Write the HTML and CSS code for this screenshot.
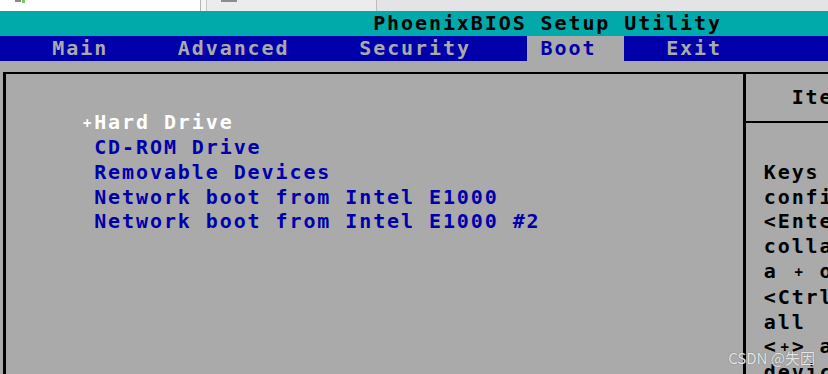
FILE: index.html
```html
<!DOCTYPE html>
<html lang="en">
<head>
    <meta charset="UTF-8">
    <title>PhoenixBIOS Setup Utility</title>
    <link rel="stylesheet" href="styles.css">
</head>
<body>
    <div class="window-tabs">
        <div class="tab tab-first"><span class="tab-icon"></span><span class="tab-dot"></span></div>
        <div class="tab tab-gap"></div>
        <div class="tab tab-second"><span class="tab-bar"></span></div>
        <div class="tab tab-rest"></div>
    </div>

    <div class="screen">
        <div class="title-row">PhoenixBIOS Setup Utility</div>
        <div class="menu-row">    Main     Advanced     Security    <span class="menu-active"> Boot  </span>   Exit</div>

        <div class="setup-area">
            <div class="frame">
                <div class="boot-list">
                    <div class="boot-item selected"><span class="expander">+</span>Hard Drive</div>
                    <div class="boot-item"> CD-ROM Drive</div>
                    <div class="boot-item"> Removable Devices</div>
                    <div class="boot-item"> Network boot from Intel E1000</div>
                    <div class="boot-item"> Network boot from Intel E1000 #2</div>
                </div>
                <div class="help">
                    <div class="help-title">Item Specific Help</div>
                    <div class="help-rule"></div>
                    <div class="help-text">Keys used to view or
configure devices:
&lt;Enter&gt; expands or
collapses devices with
a <span class="small-plus">+</span> or -
&lt;Ctrl+Enter&gt; expands
all
&lt;<span class="small-plus">+</span>&gt; and &lt;-&gt; moves the
device up or down.</div>
                </div>
            </div>
        </div>
    </div>

    <div class="watermark">CSDN @失因</div>
</body>
</html>
```

FILE: styles.css
```css
:root {
    --cw: 13.95px;
    --rh: 24.8px;
    --bios-blue: #0000aa;
    --bios-gray: #aaaaaa;
    --bios-teal: #00aaaa;
}

html, body {
    margin: 0;
    height: 374px;
    overflow: hidden;
    background: var(--bios-gray);
}

/* host window strip at the very top */
.window-tabs {
    display: flex;
    height: 11px;
}

.tab {
    height: 11px;
    box-sizing: border-box;
}

.tab-first {
    width: 201px;
    background: #ffffff;
    border-right: 1px solid #b4b4b4;
    display: flex;
    align-items: flex-start;
}

.tab-icon {
    margin-left: 15px;
    width: 6px;
    height: 2px;
    background: #8a8a8a;
}

.tab-dot {
    margin-left: 1px;
    width: 3px;
    height: 3px;
    background: #7cc466;
}

.tab-gap {
    width: 6px;
    background: #f5f5f5;
    border-right: 1px solid #c6c6c6;
}

.tab-second {
    width: 170px;
    background: #ececee;
    border-right: 1px solid #bdbdbd;
    display: flex;
    align-items: flex-start;
}

.tab-bar {
    margin-left: 14px;
    width: 16px;
    height: 2px;
    background: #8c8c8c;
}

.tab-rest {
    flex: 1;
    background: #e4e4e6;
}

/* BIOS text screen */
.screen {
    margin-left: -3.5px;
    width: calc(80 * var(--cw));
    font-family: "DejaVu Sans Mono", "Liberation Mono", monospace;
    font-weight: bold;
    font-size: 20px;
    letter-spacing: 1.91px;
    line-height: var(--rh);
}

.title-row,
.menu-row,
.boot-item,
.help-title,
.help-text {
    white-space: pre;
}

.title-row {
    height: var(--rh);
    background: var(--bios-teal);
    color: #000000;
    padding-left: calc(27 * var(--cw));
}

.menu-row {
    height: var(--rh);
    background: var(--bios-blue);
    color: var(--bios-gray);
}

.menu-active {
    background: var(--bios-gray);
    color: var(--bios-blue);
    display: inline-block;
    height: var(--rh);
    vertical-align: top;
}

.setup-area {
    padding-top: 11.4px;
}

.frame {
    display: flex;
    margin-left: 6.5px;
    border-top: 2px solid #000000;
    border-left: 3px solid #000000;
    height: 320px;
}

.boot-list {
    flex-shrink: 0;
    width: 740px;
    border-right: 3px solid #000000;
    padding-top: 36.2px;
    padding-left: 74.2px;
    box-sizing: border-box;
}

.boot-item {
    height: var(--rh);
    color: var(--bios-blue);
}

.boot-item.selected {
    color: #ffffff;
}

.expander,
.small-plus {
    display: inline-block;
    width: var(--cw);
    text-align: center;
    font-size: 14px;
    letter-spacing: 0;
    vertical-align: 1px;
}

.help {
    flex: 1;
    padding-top: 11.4px;
    color: #000000;
}

.help-title {
    height: var(--rh);
    padding-left: calc(17.75px + 2 * var(--cw));
}

.help-rule {
    border-top: 2px solid #000000;
    margin-top: 11px;
}

.help-text {
    padding-top: calc(11.8px + var(--rh));
    padding-left: 17.75px;
}

.watermark {
    position: absolute;
    right: 13px;
    bottom: 6px;
    font-family: "Noto Sans CJK SC", "Noto Sans", sans-serif;
    font-size: 15px;
    color: rgba(255, 255, 255, 0.85);
    text-shadow: 0 0 1px #555555;
    white-space: nowrap;
}
```
